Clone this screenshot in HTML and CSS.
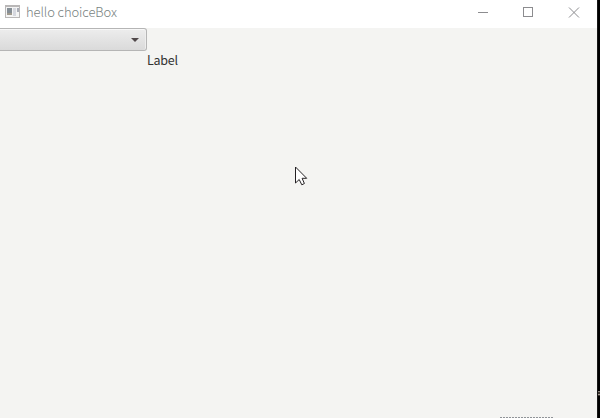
FILE: index.html
```html
<!DOCTYPE html>
<html lang="en">
<head>
<meta charset="utf-8">
<title>hello choiceBox</title>
<link rel="stylesheet" href="styles.css">
</head>
<body>
<div class="desktop">
  <section class="window">
    <header class="titlebar">
      <svg class="app-icon" width="16" height="14" viewBox="0 0 16 14" shape-rendering="crispEdges">
        <path fill="#b9b7b7" d="M0 0h15v13H0z"/>
        <path fill="#f4f4f4" d="M1 2h13v10H1z"/>
        <path fill="#858e95" d="M2 3h5v7H2z"/>
        <path fill="#a09a8e" d="M2 8h5v2H2z"/>
        <path fill="#d6d8df" d="M8 3h3v8H8z"/>
        <path fill="#a9adb7" d="M12 3h2v4h-2z"/>
      </svg>
      <h1 class="title">hello choiceBox</h1>
      <nav class="controls">
        <svg width="46" height="28" shape-rendering="crispEdges"><path d="M18 12.5h10"/></svg>
        <svg width="46" height="28" shape-rendering="crispEdges"><path d="M17.5 7.5h9v9h-9z"/></svg>
        <svg width="46" height="28"><path d="M17 7.5l10 10M27 7.5l-10 10"/></svg>
      </nav>
    </header>
    <main class="content">
      <div class="choice-box">
        <svg width="8" height="4" viewBox="0 0 8 4"><path d="M0 0h8L4 4z"/></svg>
      </div>
      <div class="label">Label</div>
    </main>
    <div class="focus-edge"></div>
  </section>
  <aside class="backdrop"><i class="speck"></i></aside>
  <svg class="pointer" width="14" height="21" viewBox="0 0 14 21"><path d="M.5 1v16l3.7-3.5 2.6 5.3 2.6-1.3-2.3-5.2h4.6z"/></svg>
</div>
</body>
</html>
```

FILE: styles.css
```css
body { margin: 0; overflow: hidden; font-family: "Noto Sans CJK SC", "Noto Sans", sans-serif; }
.desktop { position: relative; display: flex; width: 600px; height: 418px; background: #000; }
.window { display: flex; flex-direction: column; width: 597px; background: #f4f4f2; }
.titlebar { display: flex; height: 28px; background: #fff; }
.app-icon { margin: 5px 5px 0; }
.title { margin: 2px 0 0; color: #788280; font-size: 13px; font-weight: 300; line-height: 20px; letter-spacing: -.1px; white-space: nowrap; }
.controls { display: flex; margin-left: auto; margin-right: -1px; }
.controls svg { fill: none; stroke: #8c8c8f; stroke-width: 1; }
.content { display: flex; flex-direction: column; flex: 1; }
.choice-box {
  box-sizing: border-box;
  display: flex;
  align-items: center;
  justify-content: flex-end;
  width: 147px;
  height: 23px;
  padding-right: 7px;
  border: 1px solid #b5b5b5;
  border-left: 0;
  border-radius: 0 3px 3px 0;
  background: linear-gradient(#ededed, #dadada);
  box-shadow: inset 0 1px #f8f8f8, inset -1px 0 #eee;
}
.choice-box path { fill: #50484a; }
.label { margin-left: 147px; color: #333; font-size: 12.5px; line-height: 18px; letter-spacing: -.25px; }
.focus-edge { width: 53px; height: 1px; margin-left: 500px; background: repeating-linear-gradient(90deg, #909498 0 2px, #f4f4f2 2px 3px); }
.backdrop { width: 3px; padding-top: 391px; box-sizing: border-box; border-left: 1px solid #171717; }
.speck { display: block; height: 5px; background: linear-gradient(#8b8580 0 1px, #39332f 1px 3px, #a29a94 3px 4px, #39332f 4px); }
.pointer { position: absolute; left: 295px; top: 166px; }
.pointer path { fill: #fff; stroke: #242124; stroke-width: 1; }
```
